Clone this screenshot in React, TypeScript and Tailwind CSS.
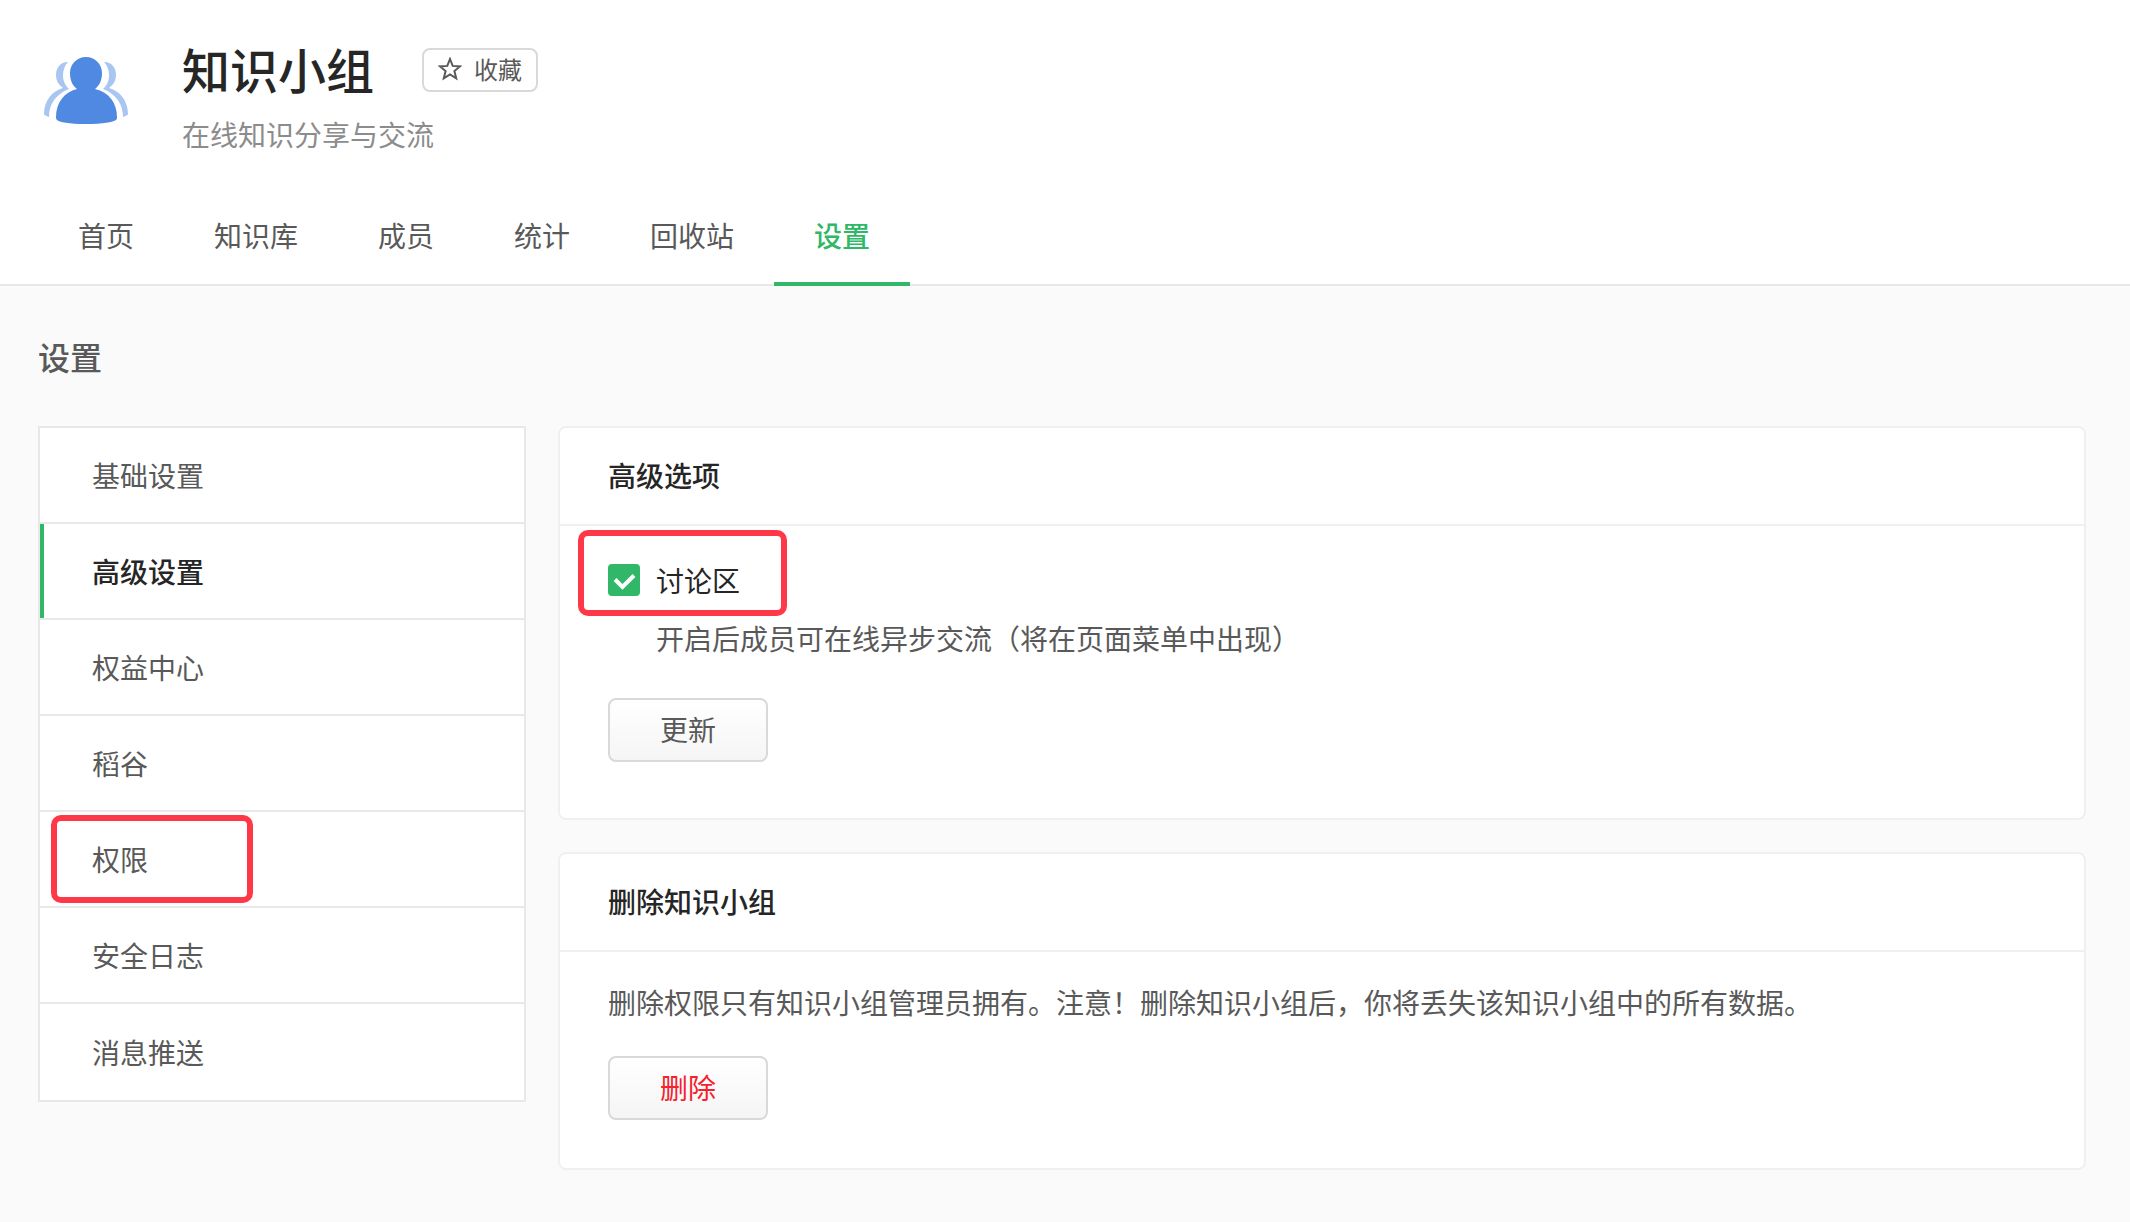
import { useState } from "react"

const TABS = ["首页", "知识库", "成员", "统计", "回收站", "设置"]

const MENU = [
  { label: "基础设置" },
  { label: "高级设置" },
  { label: "权益中心" },
  { label: "稻谷" },
  { label: "权限", marked: true },
  { label: "安全日志" },
  { label: "消息推送" },
]

function GroupIcon() {
  return (
    <svg className="w-21 h-18" viewBox="0 0 84 72" aria-hidden="true">
      <g fill="#a9c6f2">
        <path d="M24 5C16 5 12 11 12 18c0 6 3 10 7 13C8 34 0 44 0 57c0 1 2 2 5 3 0-13 7-23 20-28-4-4-6-8-6-14 0-5 2-10 5-13z" />
        <path d="M60 5c8 0 12 6 12 13 0 6-3 10-7 13 11 3 19 13 19 26 0 1-2 2-5 3 0-13-7-23-20-28 4-4 6-8 6-14 0-5-2-10-5-13z" />
      </g>
      <path
        fill="#4f89e2"
        d="M42 0c9 0 16 7 16 16 0 8-3 13-7 16 14 3 22 14 22 28 0 1 0 2-1 3-3 2-13 4-30 4s-27-2-29-4c-1-1-1-2-1-3 0-14 8-25 21-28-4-3-7-8-7-16C26 7 33 0 42 0z"
      />
    </svg>
  )
}

function StarIcon() {
  return (
    <svg className="w-6 h-6" viewBox="0 0 24 24" fill="none" stroke="#595959" strokeWidth="2" aria-hidden="true">
      <path d="M12 2l2.7 6.9 7.3.5-5.6 4.7 1.8 7.2-6.2-3.9-6.2 3.9 1.8-7.2L2 9.400l7.300-.5z" />
    </svg>
  )
}

function Card({ title, children }: { title: string; children: React.ReactNode }) {
  return (
    <section className="rounded-lg border-2 border-[#f0f0f0] bg-white">
      <h3 className="border-b-2 border-[#f0f0f0] px-12 pt-[27px] pb-[29px] leading-10 font-medium text-[#262626]">
        {title}
      </h3>
      {children}
    </section>
  )
}

const buttonClass =
  "flex h-16 w-40 items-center justify-center rounded-lg border-2 border-[#d9d9d9] bg-linear-to-b from-white to-[#f5f5f5] pb-0.5"

export default function App() {
  const [discussion, setDiscussion] = useState(true)
  const [tab, setTab] = useState("设置")
  const [active, setActive] = useState("高级设置")

  return (
    <div
      lang="zh-CN"
      className="min-h-screen bg-[#fafafa] font-['Noto_Sans_CJK_SC',sans-serif] text-[28px] leading-10 text-[#595959]"
    >
      <header className="border-b-2 border-[#e8e8e8] bg-white px-[38px] pt-10">
        <div className="flex items-start pl-1.5">
          <div className="w-[138px] pt-[17px]">
            <GroupIcon />
          </div>
          <div>
            <div className="flex items-end gap-12">
              <h1 className="text-5xl leading-14 font-medium text-[#262626]">知识小组</h1>
              <button className="mb-1 flex h-11 items-center gap-3 rounded-lg border-2 border-[#d9d9d9] px-3.5 pb-0.5 text-2xl">
                <StarIcon />
                收藏
              </button>
            </div>
            <p className="mt-[18px] text-[#8c8c8c]">在线知识分享与交流</p>
          </div>
        </div>
        <nav className="-mb-0.5 mt-[34px] flex">
          {TABS.map((name) => (
            <a
              key={name}
              href="#"
              onClick={() => setTab(name)}
              className={`flex h-[98px] items-center border-b-4 px-10 ${
                tab === name ? "border-[#31b768] font-medium text-[#31b768]" : "border-transparent"
              }`}
            >
              {name}
            </a>
          ))}
        </nav>
      </header>

      <main className="pt-[46px] pr-11 pb-13 pl-[38px]">
        <h2 className="text-[32px] leading-12 font-medium">设置</h2>
        <div className="mt-[46px] flex items-start gap-8">
          <ul className="w-[488px] shrink-0 border-2 border-[#e8e8e8] bg-white">
            {MENU.map((item) => (
              <li key={item.label} className="relative h-24 border-b-2 border-[#e8e8e8] last:border-b-0">
                <a
                  href="#"
                  onClick={() => setActive(item.label)}
                  className={`flex h-full items-center border-l-4 pl-12 ${
                    active === item.label
                      ? "border-[#31b768] font-medium text-[#262626]"
                      : "border-transparent"
                  }`}
                >
                  {item.label}
                </a>
                {item.marked && (
                  <span className="pointer-events-none absolute top-[3px] left-[11px] h-22 w-[202px] rounded-[10px] border-6 border-[#ff3847]" />
                )}
              </li>
            ))}
          </ul>

          <div className="flex min-w-0 flex-1 flex-col gap-8">
            <Card title="高级选项">
              <div className="px-12 pt-[34px] pb-14">
                <div className="relative">
                  <label className="flex items-center gap-4 text-[#262626]">
                    <span className="relative flex size-8">
                      <input
                        type="checkbox"
                        checked={discussion}
                        onChange={(e) => setDiscussion(e.target.checked)}
                        className="size-8 appearance-none rounded border-2 border-[#d9d9d9] bg-white checked:border-[#31b768] checked:bg-[#31b768]"
                      />
                      <svg
                        className="pointer-events-none absolute inset-0 size-8"
                        viewBox="0 0 32 32"
                        fill="none"
                        stroke="#fff"
                        strokeWidth="4"
                        aria-hidden="true"
                      >
                        <path d="M7 15.5l7.5 7.5L26 11.5" />
                      </svg>
                    </span>
                    讨论区
                  </label>
                  <span className="pointer-events-none absolute -top-[30px] -left-[30px] h-[86px] w-[209px] rounded-[10px] border-6 border-[#ff3847]" />
                </div>
                <p className="mt-[18px] pl-12">开启后成员可在线异步交流（将在页面菜单中出现）</p>
                <button className={`${buttonClass} mt-10`}>更新</button>
              </div>
            </Card>

            <Card title="删除知识小组">
              <div className="px-12 pt-[30px] pb-12">
                <p>删除权限只有知识小组管理员拥有。注意！删除知识小组后，你将丢失该知识小组中的所有数据。</p>
                <button className={`${buttonClass} mt-[34px] text-[#f5222d]`}>删除</button>
              </div>
            </Card>
          </div>
        </div>
      </main>
    </div>
  )
}
